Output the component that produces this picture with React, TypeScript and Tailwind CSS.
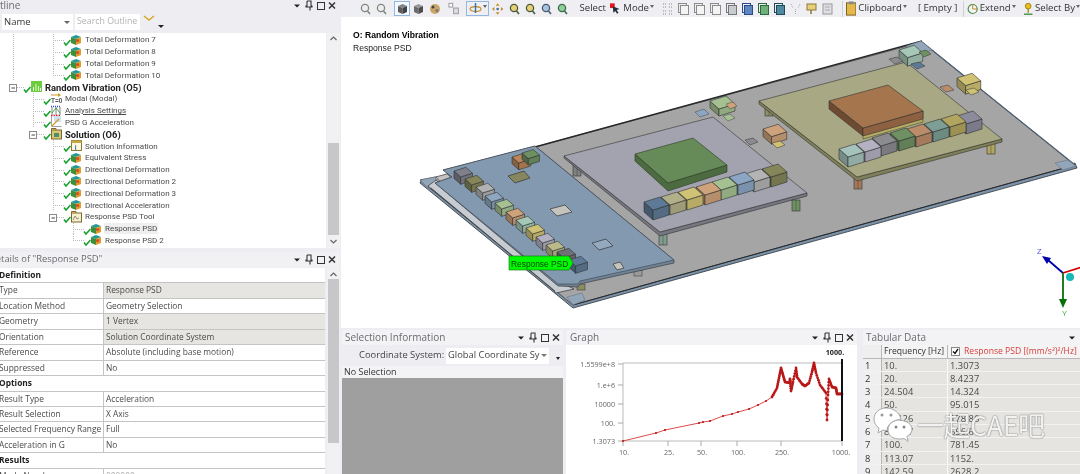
import React from 'react';

const shade = (hex: string, f: number) => {
  const n = parseInt(hex.slice(1), 16);
  const ch = (v: number) => Math.round(v * f).toString(16).padStart(2, '0');
  return `#${ch((n >> 16) & 255)}${ch((n >> 8) & 255)}${ch(n & 255)}`;
};

type BoxProps = { x: number; y: number; c: string; s?: number; h?: number };
const Box = ({ x, y, c, s = 1, h = 8 }: BoxProps) => {
  const ux = 16 * s, uy = -5 * s, vx = 9 * s, vy = 8 * s, hh = h * s;
  const line = { stroke: '#2f3333', strokeWidth: 0.6, strokeLinejoin: 'round' as const };
  return (
    <g>
      <polygon points={`${x},${y} ${x + vx},${y + vy} ${x + vx},${y + vy + hh} ${x},${y + hh}`} fill={shade(c, 0.72)} {...line} />
      <polygon points={`${x + vx},${y + vy} ${x + vx + ux},${y + vy + uy} ${x + vx + ux},${y + vy + uy + hh} ${x + vx},${y + vy + hh}`} fill={shade(c, 0.88)} {...line} />
      <polygon points={`${x},${y} ${x + ux},${y + uy} ${x + ux + vx},${y + uy + vy} ${x + vx},${y + vy}`} fill={c} {...line} />
    </g>
  );
};

const Leg = ({ x, y, c, h = 11 }: { x: number; y: number; c: string; h?: number }) => (
  <g>
    <rect x={x} y={y} width={8} height={h} fill={c} stroke="#333" strokeWidth={0.6} />
    <line x1={x + 4} y1={y} x2={x + 4} y2={y + h} stroke="#333" strokeWidth={0.4} />
  </g>
);

const greyRow: [number, number][] = [[839, 149], [856, 144], [872, 138], [890, 133], [907, 129], [924, 124], [941, 119], [957, 116]];
const greyColors = ['#a6c2bc', '#b3b1c2', '#8b8b90', '#6f9063', '#bb8c6a', '#7d9e94', '#b2a560', '#8b8b9b'];
const midRow: [number, number][] = [[644, 202], [661, 197], [678, 192], [696, 187], [712, 182], [729, 177], [745, 174], [762, 169]];
const midColors = ['#5f7a96', '#b2b088', '#d0c274', '#cea27a', '#a5c192', '#8ba6c4', '#b4b4b4', '#85865a'];
const blueRow: [number, number][] = [[454, 171], [465, 179], [476, 187], [485, 196], [495, 203], [506, 212], [516, 220], [526, 228], [536, 237], [546, 245], [557, 252], [569, 260]];
const blueColors = ['#80808c', '#85865a', '#b2b2b2', '#8ea6c0', '#a5c192', '#cea27a', '#a6c8b6', '#d0c274', '#b3b1c2', '#baba8a', '#707078', '#5f7a96'];

const Model = () => (
  <svg viewBox="341 17 739 311" className="block w-[739px] h-[311px]">
    {/* base plate */}
    <polygon points="420,183 573,308 1077,168 1075,163 573,303 422,179" fill="#7b92a8" stroke="#2e3338" strokeWidth={0.8} />
    <polygon points="535,147 922,42 1075,165 573,305 420,180 440,176" fill="#a5a5a5" stroke="#333" strokeWidth={0.7} />
    <line x1="535" y1="147" x2="922" y2="41" stroke="#26292c" strokeWidth={1.4} />
    <line x1="922" y1="42" x2="1075" y2="165" stroke="#4d5f70" strokeWidth={1.2} />
    <line x1="573" y1="305" x2="1075" y2="165" stroke="#26292c" strokeWidth={1} />
    <polygon points="906,46 921,41 932,50 916,55" fill="#92a6ba" stroke="#667" strokeWidth={0.5} />
    <polygon points="1055,163 1068,160 1076,166 1063,170" fill="#92a6ba" stroke="#667" strokeWidth={0.5} />
    <polygon points="567,297 582,293 585,300 573,305" fill="#92a6ba" stroke="#667" strokeWidth={0.5} />
    <polygon points="420,180 435,177 437,183 427,187" fill="#92a6ba" stroke="#667" strokeWidth={0.5} />
    <polygon points="436,177 447,174 452,179 441,182" fill="#c2c2c2" stroke="#444" strokeWidth={0.5} />
    {/* blue board */}
    <polygon points="428,186 552,289 556,293 574,289 558,281 436,180" fill="#c6ccd2" stroke="#333" strokeWidth={0.7} />
    <line x1="431" y1="188" x2="555" y2="291" stroke="#333" strokeWidth={0.7} />
    <rect x="577" y="284" width="8" height="6" fill="#8b8b62" stroke="#333" strokeWidth={0.5} />
    <rect x="634" y="270" width="8" height="6" fill="#9a9a9a" stroke="#333" strokeWidth={0.5} />
    <polygon points="443,170 535,146 674,260 674,263 580,284 578,287 558,286 435,183 452,177" fill="#6f8296" stroke="#333" strokeWidth={0.6} />
    <polygon points="443,170 535,146 674,260 580,281 578,284 558,284 435,183 452,177" fill="#8399b0" stroke="#3a4048" strokeWidth={0.6} />
    <Box x={512} y={157} c="#ba8558" s={0.75} h={9} />
    <Box x={522} y={153} c="#6f9063" s={0.7} h={9} />
    <polygon points="508,176 524,171 530,178 515,183" fill="#87875f" stroke="#333" strokeWidth={0.7} />
    <polygon points="550,209 565,205 572,212 557,216" fill="#c4c4bc" stroke="#333" strokeWidth={0.7} />
    <polygon points="592,243 606,239 613,246 599,250" fill="#94a8be" stroke="#333" strokeWidth={0.7} />
    <polygon points="613,264 620,262 624,268 617,270" fill="#c4c4bc" stroke="#333" strokeWidth={0.7} />
    {blueRow.map(([x, y], i) => <Box key={i} x={x} y={y} c={blueColors[i]} s={0.74} h={10} />)}
    {/* middle board */}
    <Leg x={573} y={165} c="#7f8080" />
    <Leg x={659} y={234} c="#7f9c8e" />
    <polygon points="564,156 564,158 660,236 807,196 807,193 660,232" fill="#777782" stroke="#333" strokeWidth={0.6} />
    <polygon points="564,156 713,117 807,193 660,232" fill="#a3a3af" stroke="#333" strokeWidth={0.6} />
    <polygon points="635,154 668,183 727,165 727,172 668,191 635,161" fill="#4d6b40" stroke="#2a3a24" strokeWidth={0.6} />
    <polygon points="635,154 693,138 727,165 668,183" fill="#668a58" stroke="#2a3a24" strokeWidth={0.6} />
    {[...midRow].reverse().map(([x, y], i) => <Box key={i} x={x} y={y} c={midColors[midRow.length - 1 - i]} h={10} />)}
    <Box x={710} y={101} c="#a5c192" s={1} h={7} />
    <polygon points="726,104 733,102 737,106 730,109" fill="#cea27a" stroke="#444" strokeWidth={0.5} />
    <polygon points="723,116 730,114 735,118 728,121" fill="#a5c192" stroke="#444" strokeWidth={0.5} />
    <polygon points="695,112 704,109 709,114 700,117" fill="#8ba6c4" stroke="#444" strokeWidth={0.5} />
    {/* yellow board */}
    <Leg x={765} y={105} c="#8d8d68" />
    <Leg x={854} y={178} c="#a5785a" />
    <Leg x={987} y={143} c="#b2a560" />
    <Leg x={792} y={200} c="#6f9063" />
    <polygon points="759,101 759,104 857,181 1002,142 1002,139 857,177" fill="#7f8058" stroke="#333" strokeWidth={0.6} />
    <polygon points="759,101 906,62 1002,139 857,177" fill="#a8a984" stroke="#333" strokeWidth={0.6} />
    <polygon points="863,128 923,111 923,122 863,139" fill="#b7ad62" stroke="#333" strokeWidth={0.5} />
    <polygon points="829,101 863,128 863,136 829,109" fill="#6e4a30" stroke="#333" strokeWidth={0.6} />
    <polygon points="863,128 923,111 923,119 863,136" fill="#8c6040" stroke="#333" strokeWidth={0.6} />
    <polygon points="829,101 888,85 923,111 863,128" fill="#a5754e" stroke="#333" strokeWidth={0.6} />
    {[...greyRow].reverse().map(([x, y], i) => <Box key={i} x={x} y={y} c={greyColors[greyRow.length - 1 - i]} h={10} />)}
    {/* loose parts */}
    <Box x={899} y={50} c="#a6c8b6" s={0.95} h={9} />
    <polygon points="919,52 926,50 931,54 924,57" fill="#6f9063" stroke="#333" strokeWidth={0.5} />
    <polygon points="889,59 897,57 903,61 895,64" fill="#8b8b90" stroke="#333" strokeWidth={0.5} />
    <polygon points="911,64 919,62 925,66 917,69" fill="#5f7a96" stroke="#333" strokeWidth={0.5} />
    <Box x={957} y={78} c="#d0c274" s={0.95} h={9} />
    <polygon points="966,90 974,88 979,92 971,95" fill="#d0c274" stroke="#333" strokeWidth={0.5} />
    <polygon points="940,87 948,85 954,90 946,92" fill="#bb8c6a" stroke="#333" strokeWidth={0.5} />
    <Box x={763} y={129} c="#cea27a" s={0.95} h={8} />
    <polygon points="772,143 780,141 785,145 777,148" fill="#d0c274" stroke="#333" strokeWidth={0.5} />
    <polygon points="745,140 753,138 758,142 750,145" fill="#8b8b90" stroke="#333" strokeWidth={0.5} />
    {/* probe label */}
    <polygon points="509,256 569,256 573,263 569,270 509,270" fill="#00fa00" stroke="#0a6b0a" strokeWidth={0.6} />
    <text x="511" y="267" fontSize="8.4" fontFamily="Liberation Sans, sans-serif" fill="#0b3d0b">Response PSD</text>
    {/* triad */}
    <line x1="1063" y1="273" x2="1048" y2="260" stroke="#0000a8" strokeWidth={1.8} />
    <polygon points="1042,256 1051,258 1047,264" fill="#0000a8" />
    <line x1="1063" y1="273" x2="1082" y2="267" stroke="#d40000" strokeWidth={1.8} />
    <line x1="1063" y1="273" x2="1063" y2="300" stroke="#0a6e0a" strokeWidth={1.8} />
    <polygon points="1059,299 1067,299 1063,308" fill="#0a6e0a" />
    <circle cx="1070" cy="277" r="4" fill="#18b8b8" />
    <text x="1037" y="254" fontSize="7.5" fontFamily="Liberation Sans, sans-serif" fill="#5050e8">Z</text>
    <text x="1062" y="316" fontSize="7.5" fontFamily="Liberation Sans, sans-serif" fill="#40b040">Y</text>
  </svg>
);

const curve = '623,441 656,433 665,430 699,423 703,422 710,421 723,416 732,414 738,412 749,409 758,405 766,401 772,397 777,388 779,378 781,368 783,375 785,382 790,383 790,379 791,391 793,382 796,368 797,377 802,384 805,386 809,383 812,372 814,363 816,373 820,385 826,393 827,420 828,395 829,379 832,387 836,388 837,394 842,394';
const curvePts = curve.split(' ').map((p) => p.split(',').map(Number));
const dense: number[][] = [];
curvePts.forEach((p, i) => {
  const q = curvePts[i + 1];
  dense.push(p);
  if (q && p[0] > 770) {
    for (let t = 1; t < 5; t++) dense.push([p[0] + ((q[0] - p[0]) * t) / 5, p[1] + ((q[1] - p[1]) * t) / 5]);
  }
});
const yTicks: [string, number][] = [['1.5599e+8', 364], ['1.e+6', 385], ['10000', 404], ['100.', 423], ['1.3073', 441]];
const xTicks: [string, number][] = [['10.', 623], ['25.', 668], ['50.', 701], ['100.', 737], ['250.', 781], ['1000.', 842]];

const Graph = () => (
  <svg viewBox="566 345 291 129" className="block w-[291px] h-[129px]" fontFamily="Open Sans, sans-serif" fontSize="7.2" fill="#666">
    <line x1="623" y1="363" x2="842" y2="363" stroke="#bbb" />
    <line x1="623" y1="363" x2="623" y2="441" stroke="#bbb" />
    <line x1="623" y1="441" x2="842" y2="441" stroke="#bbb" />
    {yTicks.map(([t, y]) => (
      <g key={t}>
        <line x1="618" y1={y} x2="623" y2={y} stroke="#aaa" />
        <text x="615" y={y + 2.5} textAnchor="end">{t}</text>
      </g>
    ))}
    {xTicks.map(([t, x]) => (
      <g key={t}>
        <line x1={x} y1="441" x2={x} y2="446" stroke="#aaa" />
        <text x={t === '1000.' ? x - 1 : x + 1} y="455" textAnchor="middle">{t}</text>
      </g>
    ))}
    <polyline points={curve} fill="none" stroke="#d83838" strokeWidth={0.9} />
    <g fill="#b81818">{dense.map((p, i) => <circle key={i} cx={p[0]} cy={p[1]} r={p[0] > 770 ? 1.4 : 1.1} />)}</g>
    <line x1="842" y1="359" x2="842" y2="441" stroke="#111" strokeWidth={2} />
    <text x="835" y="355" textAnchor="middle" fontWeight="700" fill="#222">1000.</text>
  </svg>
);

// pin, maximize and close buttons of a docked panel
const PanelButtons = ({ full = true }: { full?: boolean }) => (
  <svg width={full ? 44 : 12} height="12" viewBox={full ? '0 0 44 12' : '0 0 12 12'} className="shrink-0">
    <polygon points="1,4.5 7,4.5 4,7.5" fill="#222" />
    {full && (
      <g fill="none" stroke="#333">
        <path d="M14 1h4v5h1v1h-2v3.5M14 1v5h-1v1h4" strokeWidth={1.1} />
        <rect x="24.5" y="2.5" width="7" height="7" strokeWidth={1} />
        <path d="M36 2.5l6 6M42 2.5l-6 6" strokeWidth={1.5} />
      </g>
    )}
  </svg>
);

const Grip = () => (
  <div className="flex-1 h-[5px] mx-[3px] bg-[radial-gradient(#c3c3c8_0.6px,transparent_0.7px)] bg-[length:2px_2px]" />
);

// ---- outline tree ----
type Kind = 'result' | 'random' | 'modal' | 'settings' | 'psd' | 'folder' | 'info' | 'tool';
type TreeRowData = { d: number; label: string; kind: Kind; v?: number[]; half?: number; box?: number; bold?: boolean; under?: boolean; sel?: boolean };

const KindIcon = ({ kind, x }: { kind: Kind; x: number }) => {
  if (kind === 'result') {
    return (
      <g transform={`translate(${x - 5} 0)`}>
        <polygon points="0,3 5,1 10,3 5,5" fill="#1f9a96" />
        <polygon points="0,3 5,5 5,11 0,9" fill="#3f8f3a" />
        <polygon points="5,5 10,3 10,9 5,11" fill="#e09a2a" />
        <circle cx="6.5" cy="6.5" r="1.6" fill="#d84a2a" />
      </g>
    );
  }
  if (kind === 'random') {
    return (
      <g transform={`translate(${x - 5} 0)`}>
        <rect x="0" y="0" width="11" height="11" fill="#6dcc3e" />
        <path d="M2.5 10V6M5 10V3M7.5 10V5M9.5 10V7" stroke="#e8f8dc" strokeWidth={1} />
      </g>
    );
  }
  if (kind === 'modal') {
    return (
      <g transform={`translate(${x - 5} 0)`}>
        <path d="M0 2h9" stroke="#c99a2e" />
        <path d="M7 0l3 2-3 2z" fill="#c99a2e" />
        <text x="0" y="10" fontSize="6.5" fontWeight="700" fontFamily="Liberation Sans, sans-serif" fill="#555">T=0</text>
      </g>
    );
  }
  if (kind === 'settings') {
    return (
      <g transform={`translate(${x - 5} 0)`}>
        <path d="M0 1.5h10" stroke="#3a4ad0" strokeDasharray="1 1" strokeWidth={1.4} />
        <path d="M0 10.5h10" stroke="#e02020" strokeDasharray="1.5 1" strokeWidth={1.4} />
        <path d="M1 2v8M5 2v8M9 2v8" stroke="#666" strokeWidth={0.8} />
        <path d="M1 8L5 3l4 5" stroke="#30a030" fill="none" strokeWidth={0.9} />
      </g>
    );
  }
  if (kind === 'psd') {
    return (
      <g transform={`translate(${x - 5} 0)`}>
        <rect x="3" y="0" width="7" height="6" fill="#cfe0f2" />
        <path d="M0.5 0v10.5h10" stroke="#a0a0a0" fill="none" />
        <path d="M1 10L8 3" stroke="#d89a2a" strokeWidth={1.3} />
      </g>
    );
  }
  if (kind === 'info') {
    return (
      <g transform={`translate(${x - 5} 0)`}>
        <rect x="0.5" y="0.5" width="10" height="10" fill="#fff8dc" stroke="#8a7a3a" />
        <rect x="0.5" y="0.5" width="10" height="2.5" fill="#c9a84a" />
        <text x="3.8" y="9.5" fontSize="6.5" fontWeight="700" fontFamily="Liberation Sans, sans-serif" fill="#2a60c0">i</text>
      </g>
    );
  }
  return (
    <g transform={`translate(${x - 5} 0)`}>
      <rect x="0.5" y="2" width="10" height="9" fill={kind === 'tool' ? '#f5eecb' : '#d9c676'} stroke="#7a6a30" />
      <path d="M0.5 2V0.5h4.5V2" fill="#c9a84a" stroke="#7a6a30" />
      {kind === 'folder' ? <rect x="3" y="5" width="5" height="4" fill="#4c8f6a" /> : <path d="M2 9l2-4 2 3 2-1" stroke="#777" fill="none" strokeWidth={0.8} />}
    </g>
  );
};

const TreeRow = ({ row }: { row: TreeRowData }) => {
  const lx = 46 + row.d * 20;
  const parent = row.d * 20 - 7;
  return (
    <div className="flex items-center h-[11.8px]">
      <svg width={lx - 2} height="12" className="shrink-0 overflow-visible">
        {(row.v ?? []).map((x) => <line key={x} x1={x + 0.5} y1="0" x2={x + 0.5} y2="12" stroke="#bcbcbc" strokeDasharray="1 1" />)}
        {row.half !== undefined && <line x1={row.half + 0.5} y1="0" x2={row.half + 0.5} y2="6" stroke="#bcbcbc" strokeDasharray="1 1" />}
        {row.d > 0 && row.box === undefined && <line x1={parent + 20} y1="6.5" x2={parent + 32} y2="6.5" stroke="#bcbcbc" strokeDasharray="1 1" />}
        {row.box !== undefined && (
          <g>
            <line x1={row.box + 4} y1="6.5" x2={row.box + 12} y2="6.5" stroke="#bcbcbc" strokeDasharray="1 1" />
            <rect x={row.box - 3.5} y="3.5" width="7" height="7" fill="#fff" stroke="#8a8a8a" />
            <line x1={row.box - 1.5} y1="7" x2={row.box + 2} y2="7" stroke="#444" />
          </g>
        )}
        <KindIcon kind={row.kind} x={lx - 10} />
        <path d={`M${lx - 22} 8l2 2.5 4.5-5`} transform="translate(0 0.5)" stroke="#14a02c" strokeWidth={1.5} fill="none" />
      </svg>
      <span className={`whitespace-nowrap leading-[11px] px-[1px] ${row.bold ? 'font-bold text-[#222] text-[9.4px]' : ''} ${row.under ? 'underline' : ''} ${row.sel ? 'bg-[#efefef]' : ''}`}>{row.label}</span>
    </div>
  );
};

const treeRows: TreeRowData[] = [
  { d: 2, label: 'Total Deformation 7', kind: 'result', v: [13, 53] },
  { d: 2, label: 'Total Deformation 8', kind: 'result', v: [13, 53] },
  { d: 2, label: 'Total Deformation 9', kind: 'result', v: [13, 53] },
  { d: 2, label: 'Total Deformation 10', kind: 'result', v: [13], half: 53 },
  { d: 0, label: 'Random Vibration (O5)', kind: 'random', box: 13, bold: true },
  { d: 1, label: 'Modal (Modal)', kind: 'modal', v: [33] },
  { d: 1, label: 'Analysis Settings', kind: 'settings', v: [33], under: true },
  { d: 1, label: 'PSD G Acceleration', kind: 'psd', v: [33] },
  { d: 1, label: 'Solution (O6)', kind: 'folder', box: 33, bold: true },
  { d: 2, label: 'Solution Information', kind: 'info', v: [53] },
  { d: 2, label: 'Equivalent Stress', kind: 'result', v: [53] },
  { d: 2, label: 'Directional Deformation', kind: 'result', v: [53] },
  { d: 2, label: 'Directional Deformation 2', kind: 'result', v: [53] },
  { d: 2, label: 'Directional Deformation 3', kind: 'result', v: [53] },
  { d: 2, label: 'Directional Acceleration', kind: 'result', v: [53] },
  { d: 2, label: 'Response PSD Tool', kind: 'tool', box: 53 },
  { d: 3, label: 'Response PSD', kind: 'result', v: [73], sel: true },
  { d: 3, label: 'Response PSD 2', kind: 'result', half: 73 },
];

const ScrollBar = ({ thumbTop, thumbHeight }: { thumbTop: string; thumbHeight: string }) => (
  <div className="w-[13px] shrink-0 ml-[1px] flex flex-col items-center bg-[#f1f1f3]">
    <div className={`w-full ${thumbTop} flex justify-center pt-[3px]`}>
      <svg width="7" height="5"><path d="M0.5 4L3.5 1l3 3" stroke="#666" fill="none" strokeWidth={1.2} /></svg>
    </div>
    <div className={`w-[11px] bg-[#c7c7c9] ${thumbHeight}`} />
    <svg width="7" height="5" className="mt-[4px]"><path d="M0.5 1l3 3 3-3" stroke="#666" fill="none" strokeWidth={1.2} /></svg>
  </div>
);

// ---- details table ----
type DetailRow = { label: string; value?: string; grey?: boolean; head?: boolean; faint?: boolean };
const details: DetailRow[] = [
  { label: 'Definition', head: true },
  { label: 'Type', value: 'Response PSD', grey: true },
  { label: 'Location Method', value: 'Geometry Selection' },
  { label: 'Geometry', value: '1 Vertex', grey: true },
  { label: 'Orientation', value: 'Solution Coordinate System', grey: true },
  { label: 'Reference', value: 'Absolute (including base motion)' },
  { label: 'Suppressed', value: 'No' },
  { label: 'Options', head: true },
  { label: 'Result Type', value: 'Acceleration' },
  { label: 'Result Selection', value: 'X Axis' },
  { label: 'Selected Frequency Range', value: 'Full' },
  { label: 'Acceleration in G', value: 'No' },
  { label: 'Results', head: true },
  { label: 'Mode Number', value: '000000', faint: true },
];

// ---- top toolbar ----
const Mag = ({ c = '#7f8a7a', fill = 'none' }: { c?: string; fill?: string }) => (
  <svg width="11" height="12" viewBox="0 0 11 12">
    <circle cx="5" cy="5" r="3.6" stroke={c} fill={fill} strokeWidth={1.3} />
    <path d="M7.5 8l2.5 3" stroke={c} strokeWidth={1.6} />
  </svg>
);

const Cube3 = ({ c }: { c: string }) => (
  <svg width="11" height="12" viewBox="0 0 11 12">
    <polygon points="5.5,1 10,3 5.5,5 1,3" fill={c} />
    <polygon points="1,3 5.5,5 5.5,11 1,9" fill={shade(c, 0.7)} />
    <polygon points="10,3 5.5,5 5.5,11 10,9" fill={shade(c, 0.5)} />
  </svg>
);

const PageIcon = ({ tone = '#8c8c8c', fill = '#f4f4f4' }: { tone?: string; fill?: string }) => (
  <svg width="11" height="12" viewBox="0 0 11 12">
    <rect x="0.5" y="0.5" width="8" height="9" fill="#eee" stroke={tone} />
    <rect x="2.5" y="2.5" width="8" height="9" fill={fill} stroke={tone} />
  </svg>
);

const Caret = () => <span className="inline-block border-x-[2.5px] border-x-transparent border-t-[3px] border-t-[#666] mb-[4px] ml-[1px]" />;

const Toolbar = () => (
  <div className="h-[17px] flex items-center bg-[#eeeef3] pl-[20px] text-[9.6px] text-[#333] whitespace-nowrap shrink-0">
    <div className="flex items-center gap-[5px] w-[33px]"><Mag /><Mag /></div>
    <div className="w-[17px] h-[15px] mr-[2px] ml-[3px] border border-[#8fb8e2] bg-[#f5f8fc] flex items-center justify-center"><Cube3 c="#808488" /></div>
    <div className="flex items-center gap-[5px] ml-[1px] w-[36px]"><Cube3 c="#9a9a9a" /><svg width="12" height="12" viewBox="0 0 12 12"><circle cx="6" cy="6" r="5" fill="#caa668" /><circle cx="4" cy="4" r="1.5" fill="#444" /><circle cx="8" cy="7.5" r="1.5" fill="#777" /></svg></div>
    <svg width="12" height="13" viewBox="0 0 12 13" className="ml-[1px] mr-[7px]"><rect x="1" y="1" width="4" height="4" fill="#fff" stroke="#999" /><rect x="6" y="6" width="5" height="6" fill="#ddd" stroke="#999" /></svg>
    <div className="w-[24px] h-[15px] border border-[#8fb8e2] flex items-center pl-[2px]">
      <svg width="13" height="13" viewBox="0 0 13 13"><ellipse cx="6.5" cy="7" rx="5.5" ry="2.4" fill="none" stroke="#c08a20" strokeWidth={1.1} /><path d="M6.5 1v10" stroke="#3a6ea8" strokeWidth={1.4} /></svg>
      <Caret />
    </div>
    <svg width="12" height="12" viewBox="0 0 12 12" className="ml-[3px]"><path d="M6 0l2 2.5H4zM6 12l2-2.5H4zM0 6l2.5-2v4zM12 6l-2.5-2v4z" fill="#c08a20" /><circle cx="6" cy="6" r="1.4" fill="#3a6ea8" /></svg>
    <div className="flex items-center gap-[5px] ml-[5px]"><Mag c="#4a5a3a" fill="#e8cf7a" /><Mag c="#4a5a3a" fill="#e8cf7a" /></div>
    <div className="flex items-center ml-[5px] gap-[5px]"><Mag c="#4a5a70" fill="#a8c4e0" /><Mag c="#3a6a4a" fill="#8fd09a" /></div>
    <span className="ml-[12px]">Select</span>
    <svg width="12" height="12" viewBox="0 0 12 12" className="ml-[4px]"><rect x="0" y="0" width="5" height="5" fill="#e8141c" /><path d="M3 3l7 3-3 1 2 3-1.5 1-2-3-2 2z" fill="#22303c" /></svg>
    <span className="ml-[2px]">Mode</span><Caret />
    <div className="flex items-center gap-[5px] ml-[8px]">
      <svg width="11" height="12" viewBox="0 0 11 12"><path d="M1 1h3M7 1h3M1 4h3M7 4h3M1 8h3M7 8h3M1 11h3M7 11h3" stroke="#8c8c8c" strokeDasharray="1 1" /></svg>
      <PageIcon /><PageIcon /><PageIcon /><PageIcon tone="#777" fill="#c8ccd0" />
      <PageIcon tone="#2a4a8a" fill="#5f86c0" /><PageIcon tone="#2a6a3a" fill="#6fb07a" /><PageIcon tone="#1f4a5a" fill="#4f8aa0" />
      <svg width="11" height="12" viewBox="0 0 11 12"><path d="M1 1l2 4M10 1L8 5M5.5 6v5" stroke="#aaa" strokeDasharray="1 1" /></svg>
      <svg width="11" height="12" viewBox="0 0 11 12"><rect x="1" y="1" width="9" height="6" fill="#e8cf7a" stroke="#8a7a3a" /><path d="M5 7v4" stroke="#8a7a3a" strokeWidth={1.5} /></svg>
      <svg width="11" height="12" viewBox="0 0 11 12"><rect x="1" y="1" width="9" height="10" fill="#e0e0e4" stroke="#999" /><path d="M3 4h5M3 7h5" stroke="#aaa" /></svg>
    </div>
    <div className="ml-[9px] h-[16px] border-l border-[#d0d0d4]" />
    <svg width="11" height="15" viewBox="0 0 11 15" className="ml-[3px]"><rect x="0.5" y="1.5" width="10" height="13" fill="#e4b94a" stroke="#7a6020" /><rect x="3" y="0" width="5" height="3" fill="#888" /></svg>
    <span className="ml-[2px]">Clipboard</span><Caret />
    <span className="ml-[11px]">[ Empty ]</span>
    <div className="ml-[6px] h-[16px] border-l border-[#d0d0d4]" />
    <svg width="12" height="12" viewBox="0 0 12 12" className="ml-[3px]"><circle cx="6" cy="6" r="4.8" fill="#f4f4f4" stroke="#4a8a4a" strokeWidth={1.2} /><path d="M6 1v5h5" stroke="#c08a20" fill="none" /></svg>
    <span className="ml-[1px]">Extend</span><Caret />
    <svg width="11" height="14" viewBox="0 0 11 14" className="ml-[7px]"><circle cx="5.5" cy="4" r="3" fill="#e8c020" stroke="#a08010" /><path d="M5.5 7v4" stroke="#a08010" strokeWidth={1.4} /><path d="M1 12.5h9" stroke="#3a8a3a" strokeWidth={1.4} /></svg>
    <span className="ml-[2px]">Select By</span><Caret />
  </div>
);

const tabular: [string, string][] = [
  ['10.', '1.3073'], ['20.', '8.4237'], ['24.504', '14.324'], ['50.', '95.015'], ['59.126', '178.86'],
  ['83.547', '656.6'], ['100.', '781.45'], ['113.07', '1152.'], ['142.59', '2628.2'],
];

const Watermark = () => (
  <div className="absolute left-[873px] top-[405px] flex items-center gap-[4px] pointer-events-none">
    <svg width="40" height="38" viewBox="0 0 40 38">
      <path d="M13 3C6 3 1 8 1 14c0 4 2 7 5 9l-1 5 5-3c1 .4 3 .6 4 .6 0-6 6-11 14-11C27 8 21 3 13 3z" fill="#fff" stroke="#aaa" strokeWidth={1} />
      <circle cx="9" cy="10" r="1.5" fill="#999" /><circle cx="18" cy="10" r="1.5" fill="#999" />
      <path d="M27 15c-7 0-12 4-12 10s5 9 12 9c1 0 3 0 4-.6l4 3-1-5c3-2 5-4 5-7 0-5-5-9-12-9z" fill="#fff" stroke="#aaa" strokeWidth={1} />
      <circle cx="23" cy="22" r="1.5" fill="#888" /><circle cx="31" cy="22" r="1.5" fill="#888" />
    </svg>
    <span className="font-['Noto_Sans_CJK_SC',sans-serif] text-[27px] leading-none text-white/90 tracking-[-0.5px] [text-shadow:0_0_1.5px_#777,0_0_1px_#777]">一起CAE吧</span>
  </div>
);

export default function App() {
  return (
    <div className="relative flex w-[1080px] h-[474px] overflow-hidden bg-[#eeeef2] font-['Open_Sans',sans-serif] text-[#4a4a4a] text-[8.4px] blur-[0.3px]">
      {/* left column: outline + details */}
      <aside className="w-[340px] shrink-0 flex flex-col">
        <div className="h-[11px] flex items-center text-[10px] text-[#6b6b70] shrink-0">
          <span className="-ml-[14px]">Outline</span>
          <Grip />
          <PanelButtons />
          <span className="w-[3px]" />
        </div>
        <div className="h-[22px] flex items-center pl-[2px] shrink-0">
          <div className="w-[71px] h-[16px] bg-white flex items-center justify-between px-[2px] text-[9.5px] text-[#333]">Name <span className="inline-block border-x-[3px] border-x-transparent border-t-[3px] border-t-[#666] mr-[1px]" /></div>
          <div className="ml-[2px] w-[65px] h-[16px] bg-white flex items-center px-[2px] text-[8.8px] text-[#b4b4b4] whitespace-nowrap overflow-hidden">Search Outline</div>
          <svg width="12" height="8" viewBox="0 0 12 8" className="ml-[3px] mb-[6px]"><path d="M1 1l5 4 5-4" stroke="#d8a828" fill="none" strokeWidth={1.6} /></svg>
          <span className="inline-block ml-[3px] mt-[8px] border-x-[3px] border-x-transparent border-t-[3px] border-t-[#222]" />
        </div>
        <div className="h-[215px] flex shrink-0">
          <div className="w-[326px] pt-[1px] bg-white overflow-hidden font-['Roboto',sans-serif] text-[8px]">
            {treeRows.map((r) => <TreeRow key={r.label} row={r} />)}
          </div>
          <ScrollBar thumbTop="h-[110px]" thumbHeight="h-[92px]" />
        </div>
        <div className="h-[4px] shrink-0" />
        <div className="h-[15px] flex items-center text-[9.4px] text-[#6b6b70] shrink-0 bg-[#f1f1f4]">
          <span className="-ml-[11px] whitespace-nowrap">Details of "Response PSD"</span>
          <Grip />
          <PanelButtons />
          <span className="w-[3px]" />
        </div>
        <div className="flex-1 flex min-h-0 mt-[1px]">
          <div className="w-[325px] bg-white overflow-hidden">
            {details.map((d) => (
              <div key={d.label} className="h-[15.45px] flex border-b border-[#c4c4c4] whitespace-nowrap leading-[14px]">
                {d.head ? (
                  <span className="-ml-[1px] font-bold text-[#222]">{d.label}</span>
                ) : (
                  <>
                    <span className="w-[103px] shrink-0 -ml-[1px] pr-[1px] overflow-hidden border-r border-[#c4c4c4] box-content">{d.label}</span>
                    <span className={`flex-1 pl-[2px] ${d.grey ? 'bg-[#e6e5e1]' : ''} ${d.faint ? 'text-[#aaa]' : ''}`}>{d.value}</span>
                  </>
                )}
              </div>
            ))}
          </div>
          <div className="w-[13px] ml-[2px] shrink-0 bg-[#f1f1f3] flex flex-col items-center">
            <svg width="7" height="5" className="mt-[4px]"><path d="M0.5 4L3.5 1l3 3" stroke="#666" fill="none" strokeWidth={1.2} /></svg>
            <div className="w-[11px] h-[164px] mt-[2px] bg-[#c7c7c9]" />
          </div>
        </div>
      </aside>

      {/* main column */}
      <main className="flex-1 min-w-0 flex flex-col">
        <Toolbar />
        <div className="relative h-[311px] bg-white shrink-0 ml-[1px]">
          <Model />
          <div className="absolute left-[12px] top-[12px] font-['Liberation_Sans',sans-serif] text-[8.6px] text-[#222] leading-[12px]">
            <div className="font-bold text-black">O: Random Vibration</div>
            <div className="mt-[1px]">Response PSD</div>
          </div>
        </div>
        <div className="flex-1 min-h-0 flex pt-[2px]">
          {/* selection information */}
          <section className="w-[221px] ml-[2px] shrink-0 flex flex-col">
            <div className="h-[15px] flex items-center text-[10px] text-[#6b6b70] bg-[#f3f3f6] pl-[3px] pr-[2px] shrink-0">
              <span>Selection Information</span>
              <Grip />
              <PanelButtons />
            </div>
            <div className="h-[21px] flex items-center pl-[6px] shrink-0 text-[9.4px] text-[#444] bg-[#eeeef2] whitespace-nowrap">
              <div className="w-[6px] h-[12px] shrink-0 bg-[radial-gradient(#bcbcc2_0.6px,transparent_0.7px)] bg-[length:2px_2px]" />
              <span className="ml-[5px] w-[87px] shrink-0">Coordinate System:</span>
              <div className="w-[103px] shrink-0 h-[16px] bg-white flex items-center pl-[2px] justify-between overflow-hidden">
                Global Coordinate Sy
                <span className="inline-block border-x-[3px] border-x-transparent border-t-[3px] border-t-[#777] mr-[2px]" />
              </div>
              <span className="inline-block ml-[7px] mt-[6px] border-x-[2.5px] border-x-transparent border-t-[3px] border-t-[#222]" />
            </div>
            <div className="h-[12px] flex items-center pl-[2px] bg-[#f3f3f5] text-[#333] text-[9px] shrink-0">No Selection</div>
            <div className="flex-1 bg-[#9f9f9f]" />
          </section>
          {/* graph */}
          <section className="w-[291px] ml-[3px] shrink-0 flex flex-col">
            <div className="h-[15px] flex items-center text-[10px] text-[#6b6b70] bg-[#f3f3f6] pl-[4px] pr-[2px] shrink-0">
              <span>Graph</span>
              <Grip />
              <PanelButtons />
            </div>
            <div className="flex-1 bg-white"><Graph /></div>
          </section>
          {/* tabular data */}
          <section className="flex-1 min-w-0 ml-[6px] flex flex-col">
            <div className="h-[15px] flex items-center text-[10px] text-[#6b6b70] bg-[#f3f3f6] pl-[3px] shrink-0">
              <span className="whitespace-nowrap">Tabular Data</span>
              <Grip />
              <PanelButtons full={false} />
            </div>
            <div className="flex h-[13.5px] bg-white text-[#333] border-b border-[#b8b8b8] shrink-0 whitespace-nowrap leading-[13px] text-[8.6px]">
              <div className="w-[19px] bg-[#efefef] border-r border-[#b8b8b8]" />
              <div className="w-[66px] pl-[2px] border-r border-[#b8b8b8] bg-[#f4f4f4]">Frequency [Hz]</div>
              <div className="flex-1 flex items-center pl-[3px] text-[#d83a3a] bg-[#f4f4f4]">
                <span className="w-[9px] h-[9px] bg-white border border-[#888] mr-[4px] flex items-center justify-center shrink-0">
                  <svg width="7" height="7" viewBox="0 0 7 7"><path d="M1 3.5l2 2 3-4.5" stroke="#111" strokeWidth={1.4} fill="none" /></svg>
                </span>
                Response PSD [(mm/s²)²/Hz]
              </div>
            </div>
            {tabular.map(([f, r], i) => (
              <div key={i} className="flex h-[13.3px] leading-[13px] bg-[#e5e4e0] text-[#4a4a4a] border-b border-[#f2f2f0] shrink-0 text-[9.4px]">
                <div className="w-[19px] pl-[2px] bg-[#efefef] border-r border-[#b8b8b8] text-[#333]">{i + 1}</div>
                <div className="w-[66px] pl-[2px] border-r border-[#fafafa]">{f}</div>
                <div className="flex-1 pl-[2px]">{r}</div>
              </div>
            ))}
          </section>
        </div>
      </main>
      <Watermark />
    </div>
  );
}
